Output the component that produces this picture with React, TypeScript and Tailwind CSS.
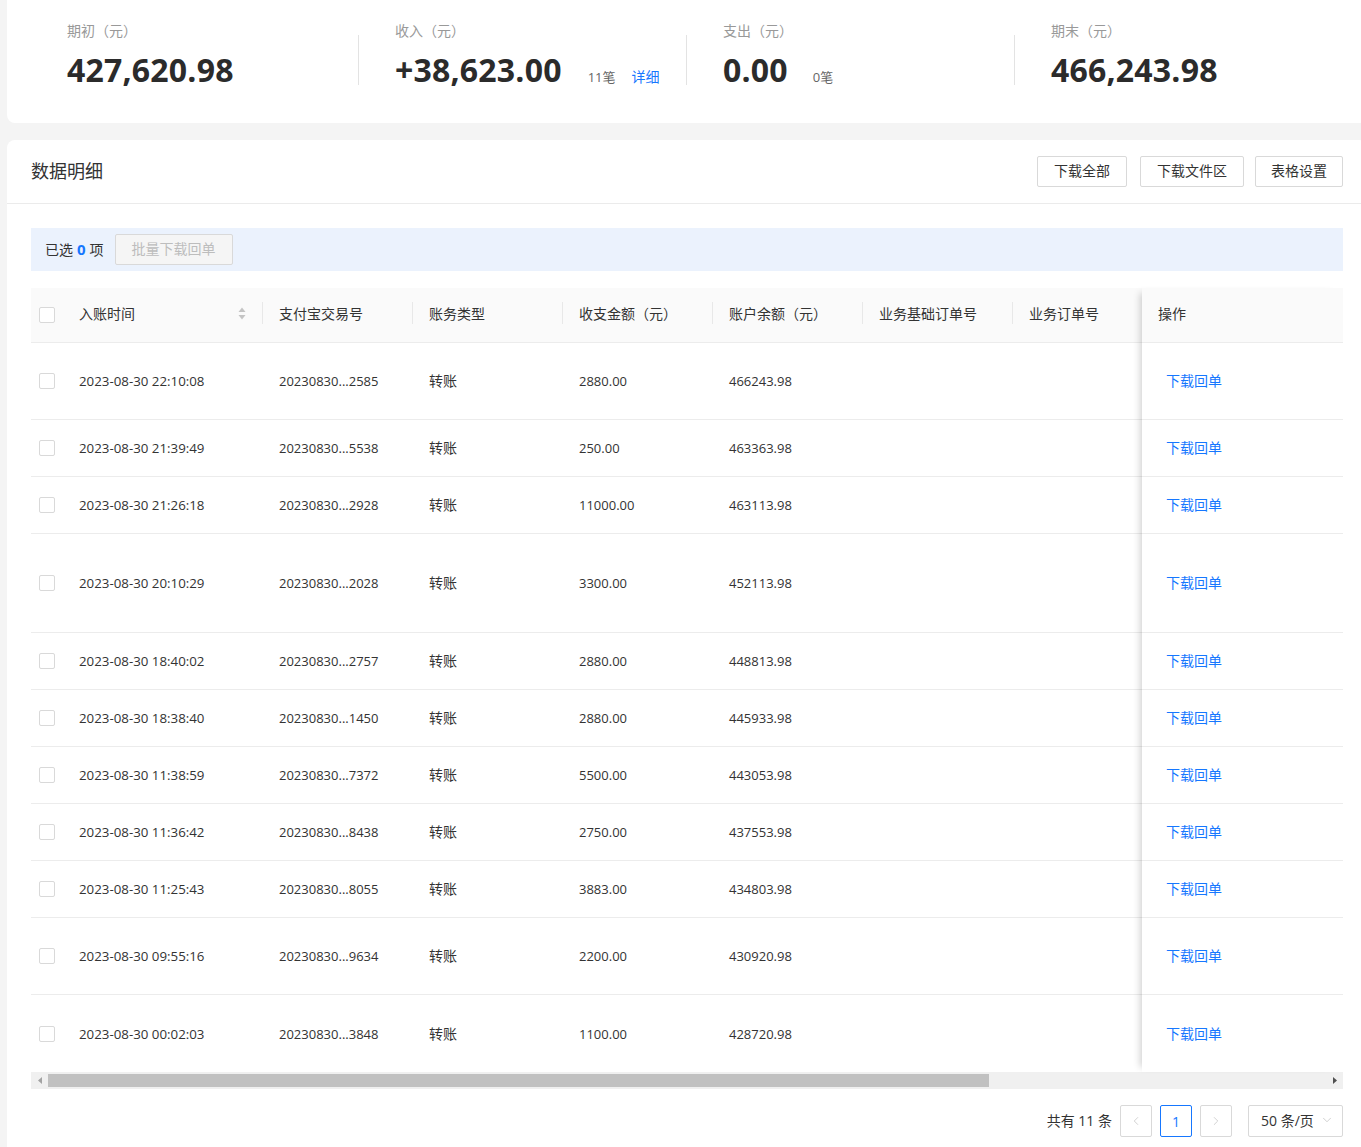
import { ChevronDown, ChevronLeft, ChevronRight } from "lucide-react";

const rows = [
  { time: "2023-08-30 22:10:08", no: "20230830...2585", amount: "2880.00", balance: "466243.98", h: "h-[77px]" },
  { time: "2023-08-30 21:39:49", no: "20230830...5538", amount: "250.00", balance: "463363.98", h: "h-[57px]" },
  { time: "2023-08-30 21:26:18", no: "20230830...2928", amount: "11000.00", balance: "463113.98", h: "h-[57px]" },
  { time: "2023-08-30 20:10:29", no: "20230830...2028", amount: "3300.00", balance: "452113.98", h: "h-[99px]" },
  { time: "2023-08-30 18:40:02", no: "20230830...2757", amount: "2880.00", balance: "448813.98", h: "h-[57px]" },
  { time: "2023-08-30 18:38:40", no: "20230830...1450", amount: "2880.00", balance: "445933.98", h: "h-[57px]" },
  { time: "2023-08-30 11:38:59", no: "20230830...7372", amount: "5500.00", balance: "443053.98", h: "h-[57px]" },
  { time: "2023-08-30 11:36:42", no: "20230830...8438", amount: "2750.00", balance: "437553.98", h: "h-[57px]" },
  { time: "2023-08-30 11:25:43", no: "20230830...8055", amount: "3883.00", balance: "434803.98", h: "h-[57px]" },
  { time: "2023-08-30 09:55:16", no: "20230830...9634", amount: "2200.00", balance: "430920.98", h: "h-[77px]" },
  { time: "2023-08-30 00:02:03", no: "20230830...3848", amount: "1100.00", balance: "428720.98", h: "h-[77px]" },
];

const headCols = ["支付宝交易号", "账务类型", "收支金额（元）", "账户余额（元）", "业务基础订单号", "业务订单号"];

function Checkbox() {
  return <span className="block w-4 h-4 rounded-[2px] border border-[#d9d9d9] bg-white" />;
}

function Divider() {
  return <span className="block w-px h-[22px] bg-[#e8e8e8]" />;
}

function Stat({ label, value, extra, last }: { label: string; value: string; extra?: React.ReactNode; last?: boolean }) {
  return (
    <div className="flex w-[328px] items-start">
      <div className="flex-1 pl-9">
        <div className="text-[14px] leading-[18px] text-[#999]">{label}</div>
        <div className="mt-[10px] flex items-baseline leading-[40px]">
          <span className="text-[32px] font-bold text-[#2b2b2b] tracking-[0.2px]">{value}</span>
          {extra}
        </div>
      </div>
      {!last && <span className="mt-[13px] block h-[50px] w-px bg-[#e3e3e3]" />}
    </div>
  );
}

export default function App() {
  return (
    <div
      className="w-[1361px] h-[1147px] overflow-hidden bg-[#f4f4f4] text-[#333]"
      style={{ fontFamily: '"Open Sans", "Noto Sans CJK SC", sans-serif' }}
    >
      {/* summary */}
      <div className="ml-[7px] w-[1360px] h-[123px] rounded-b-lg bg-white pt-[22px] pl-6 flex">
        <Stat label="期初（元）" value="427,620.98" />
        <Stat
          label="收入（元）"
          value="+38,623.00"
          extra={
            <>
              <span className="ml-[26px] text-[13px] text-[#666]">11笔</span>
              <span className="ml-4 text-[14px] text-[#1677ff]">详细</span>
            </>
          }
        />
        <Stat label="支出（元）" value="0.00" extra={<span className="ml-[25px] text-[13px] text-[#666]">0笔</span>} />
        <Stat label="期末（元）" value="466,243.98" last />
      </div>

      {/* detail card */}
      <div className="ml-[7px] mt-[17px] w-[1360px] rounded-t-lg bg-white">
        <div className="h-[64px] border-b border-[#ebebeb] px-6 flex items-center justify-between">
          <div className="text-[18px] text-[#333] pb-[1px]">数据明细</div>
          <div className="flex">
            <button className="h-[31px] px-4 pb-[2px] border border-[#d9d9d9] rounded-[2px] bg-white text-[14px] text-[#333]">下载全部</button>
            <button className="ml-[13px] h-[31px] px-4 pb-[2px] border border-[#d9d9d9] rounded-[2px] bg-white text-[14px] text-[#333]">下载文件区</button>
            <button className="ml-[11px] h-[31px] px-[15px] pb-[2px] border border-[#d9d9d9] rounded-[2px] bg-white text-[14px] text-[#333]">表格设置</button>
          </div>
        </div>

        <div className="px-6 pt-6">
          <div className="h-[43px] bg-[#ebf2fd] flex items-center pl-[14px] text-[14px]">
            <span>已选</span>
            <span className="mx-1 text-[15px] font-bold text-[#1677ff]">0</span>
            <span>项</span>
            <button className="ml-[11px] h-[31px] px-4 pb-[2px] border border-[#d9d9d9] rounded-[2px] bg-[#f5f5f5] text-[14px] text-[#bdbdbd]">
              批量下载回单
            </button>
          </div>

          {/* table */}
          <div className="mt-[17px] flex text-[14px]">
            <div className="flex-1 overflow-hidden">
              <div className="w-[1132px]">
                <div className="h-[55px] pb-1 bg-[#fafafa] border-b border-[#ececec] flex items-center">
                  <div className="w-8 pl-2 pt-1">
                    <Checkbox />
                  </div>
                  <div className="w-[200px] pl-4 flex items-center">
                    <span className="flex-1">入账时间</span>
                    <svg width="8" height="13" viewBox="0 0 8 13" className="mr-[16px]">
                      <path d="M4 0.5 L7.5 5 H0.5 Z" fill="#c4c4c4" />
                      <path d="M4 12.5 L7.5 8 H0.5 Z" fill="#c4c4c4" />
                    </svg>
                    <Divider />
                  </div>
                  {headCols.map((c) => (
                    <div key={c} className="w-[150px] pl-4 flex items-center">
                      <span className="flex-1">{c}</span>
                      <Divider />
                    </div>
                  ))}
                </div>
                {rows.map((r, i) => (
                  <div
                    key={r.no}
                    className={`${r.h} flex items-center text-[#333] ${i < rows.length - 1 ? "border-b border-[#ececec]" : ""}`}
                  >
                    <div className="w-8 pl-2">
                      <Checkbox />
                    </div>
                    <div className="w-[200px] pl-4 pt-[2px] text-[13.3px]">{r.time}</div>
                    <div className="w-[150px] pl-4 pt-[2px] text-[13px]">{r.no}</div>
                    <div className="w-[150px] pl-4 pb-[1px]">转账</div>
                    <div className="w-[150px] pl-4 pt-[2px] text-[13px]">{r.amount}</div>
                    <div className="w-[150px] pl-4 pt-[2px] text-[13px]">{r.balance}</div>
                    <div className="w-[150px] pl-4" />
                    <div className="w-[150px] pl-4" />
                  </div>
                ))}
              </div>
            </div>

            {/* fixed column */}
            <div className="relative z-10 w-[201px] bg-white shadow-[-7px_0_7px_-5px_rgba(0,0,0,0.18)]">
              <div className="h-[55px] pb-1 bg-[#fafafa] border-b border-[#ececec] flex items-center pl-4">操作</div>
              {rows.map((r, i) => (
                <div
                  key={r.no}
                  className={`${r.h} pb-[1px] flex items-center pl-6 ${i < rows.length - 1 ? "border-b border-[#ececec]" : ""}`}
                >
                  <span className="text-[#1677ff]">下载回单</span>
                </div>
              ))}
            </div>
          </div>

          {/* scrollbar */}
          <div className="h-[17px] bg-[#f0f0f0] flex items-center">
            <div className="w-[17px] flex justify-center">
              <svg width="4" height="7" viewBox="0 0 4 7">
                <path d="M4 0 V7 L0 3.5 Z" fill="#a3a3a3" />
              </svg>
            </div>
            <div className="h-[13px] w-[941px] bg-[#c1c1c1]" />
            <div className="flex-1" />
            <div className="w-[17px] flex justify-center">
              <svg width="4" height="7" viewBox="0 0 4 7">
                <path d="M0 0 V7 L4 3.5 Z" fill="#505050" />
              </svg>
            </div>
          </div>

          {/* pagination */}
          <div className="mt-4 flex items-center justify-end text-[14px] text-[#333]">
            <span className="mr-2 pb-[2px]">共有 11 条</span>
            <span className="w-8 h-8 border border-[#d9d9d9] rounded-[2px] flex items-center justify-center text-[#c4c4c4]">
              <ChevronLeft size={14} strokeWidth={1.3} />
            </span>
            <span className="ml-2 w-8 h-8 border border-[#1677ff] rounded-[2px] flex items-center justify-center text-[#1677ff]">1</span>
            <span className="ml-2 w-8 h-8 border border-[#d9d9d9] rounded-[2px] flex items-center justify-center text-[#c4c4c4]">
              <ChevronRight size={14} strokeWidth={1.3} />
            </span>
            <span className="ml-4 w-[95px] h-8 pb-[2px] border border-[#d9d9d9] rounded-[2px] flex items-center justify-between pl-3 pr-2 text-[14px]">
              <span>50 条/页</span>
              <ChevronDown size={14} strokeWidth={1.2} className="text-[#bdbdbd]" />
            </span>
          </div>
          <div className="h-10" />
        </div>
      </div>
    </div>
  );
}
